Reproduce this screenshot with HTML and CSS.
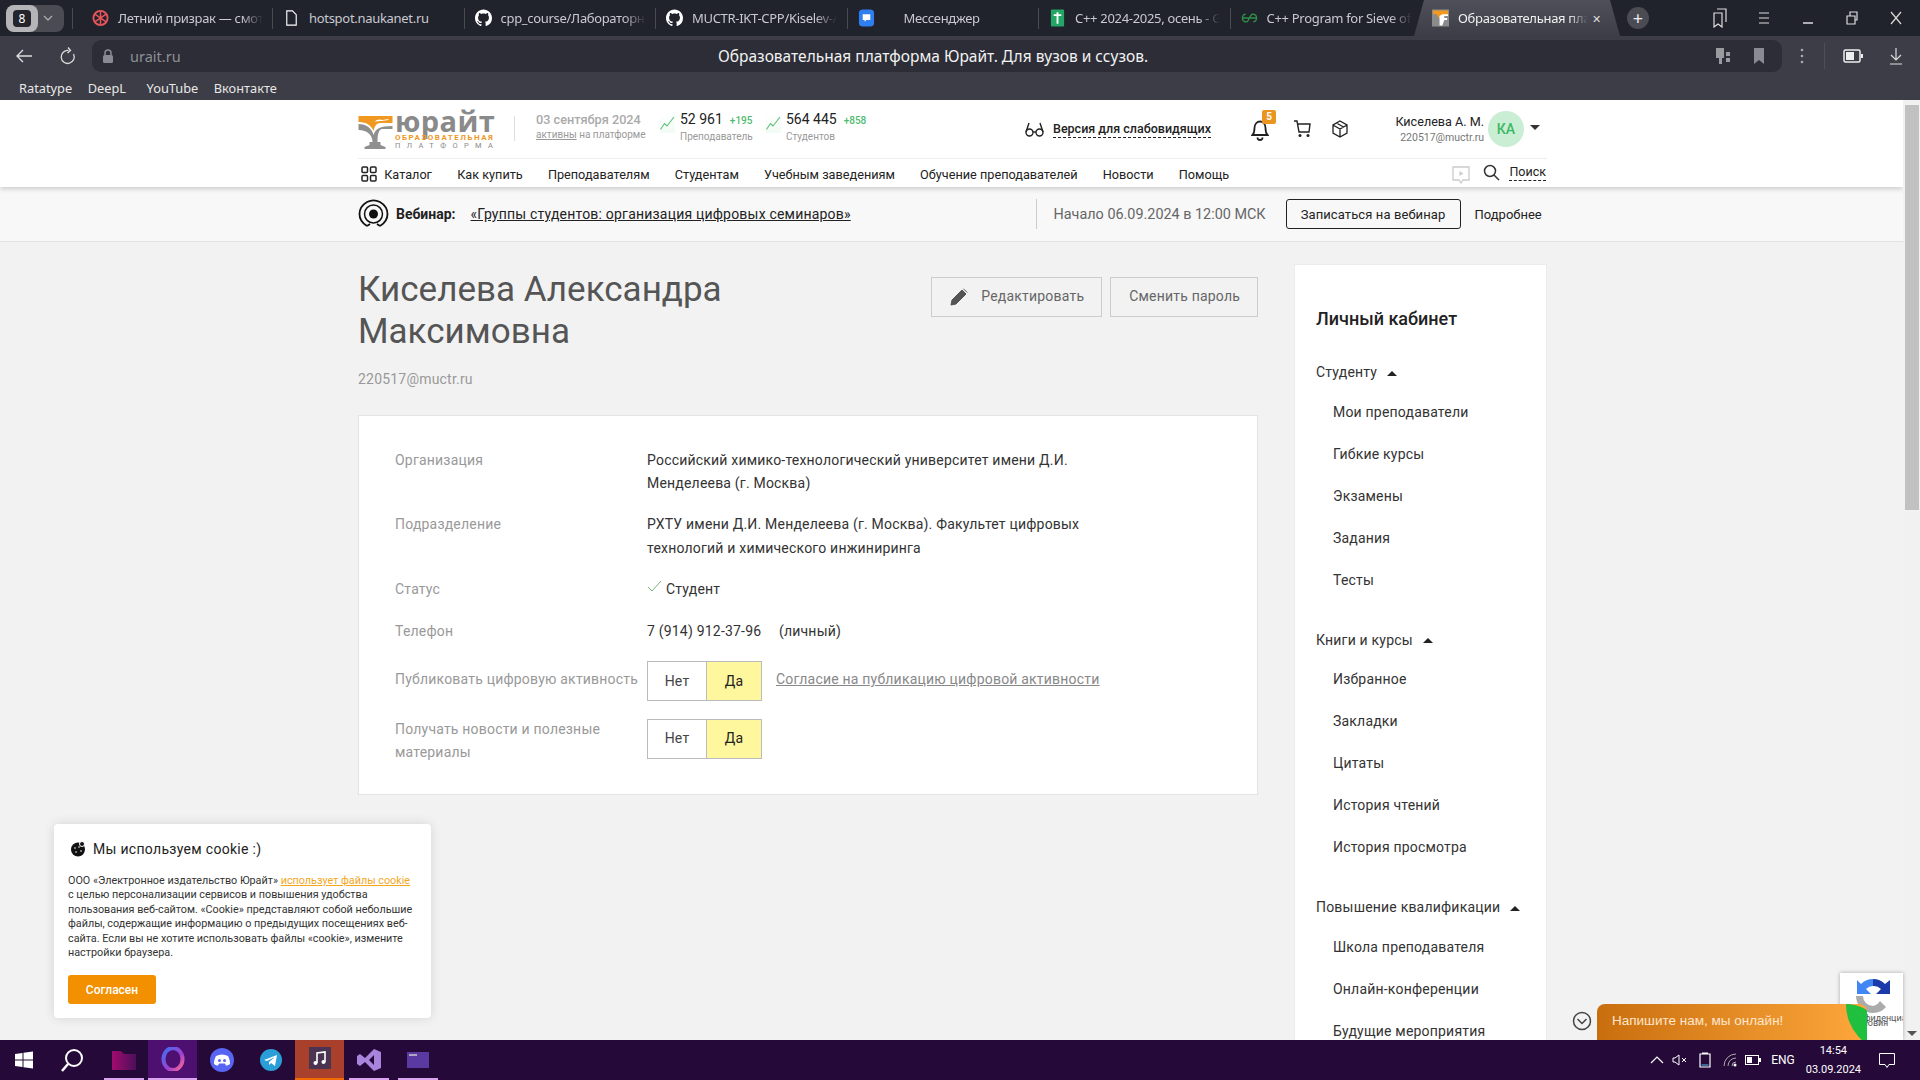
FILE: index.html
```html
<!DOCTYPE html>
<html lang="ru">
<head>
<meta charset="utf-8">
<title>Юрайт</title>
<link rel="stylesheet" href="styles.css">
</head>
<body>
<svg class="defs" aria-hidden="true"><defs>
<symbol id="gh" viewBox="0 0 16 16"><path fill="#fff" d="M8 0C3.58 0 0 3.58 0 8c0 3.54 2.29 6.53 5.47 7.59.4.07.55-.17.55-.38 0-.19-.01-.82-.01-1.49-2.01.37-2.53-.49-2.69-.94-.09-.23-.48-.94-.82-1.13-.28-.15-.68-.52-.01-.53.63-.01 1.08.58 1.23.82.72 1.21 1.87.87 2.33.66.07-.52.28-.87.51-1.07-1.78-.2-3.64-.89-3.64-3.95 0-.87.31-1.59.82-2.15-.08-.2-.36-1.02.08-2.12 0 0 .67-.21 2.2.82.64-.18 1.32-.27 2-.27.68 0 1.36.09 2 .27 1.53-1.04 2.2-.82 2.2-.82.44 1.1.16 1.92.08 2.12.51.56.82 1.27.82 2.15 0 3.07-1.87 3.75-3.65 3.95.29.25.54.73.54 1.48 0 1.07-.01 1.93-.01 2.2 0 .21.15.46.55.38A8.013 8.013 0 0016 8c0-4.42-3.58-8-8-8z"/></symbol>
<symbol id="trend" viewBox="0 0 15 15"><path d="M.5 14 L4.500 8 L7 10.500 L14 1.500" fill="none" stroke="#5cbf77" stroke-width="1.100"/></symbol>
</defs></svg>

<header class="browser">
  <div class="tabstrip">
    <div class="counter"><span class="counter-num"><span class="counter-in">8</span></span><svg class="counter-caret" width="10" height="6" viewBox="0 0 10 6"><path d="M1 1l4 4 4-4" fill="none" stroke="#aaa" stroke-width="1.3"/></svg></div>
    <div class="tab tab-first">
      <svg class="fav" viewBox="0 0 18 18"><circle cx="9" cy="9" r="7.5" fill="none" stroke="#e8545a" stroke-width="2"/><path d="M9 2v14M3 5l12 8M15 5L3 13" stroke="#e8545a" stroke-width="1.6"/></svg>
      <span class="tab-title">Летний призрак — смотреть онлайн</span>
    </div>
    <div class="tab">
      <svg class="fav" viewBox="0 0 18 18"><path d="M4 1.5h6l4 4v11H4z" fill="none" stroke="#fff" stroke-width="1.2"/></svg>
      <span class="tab-title tab-plain">hotspot.naukanet.ru</span>
    </div>
    <div class="tab"><svg class="fav"><use href="#gh"/></svg><span class="tab-title">cpp_course/Лабораторная работа</span></div>
    <div class="tab"><svg class="fav"><use href="#gh"/></svg><span class="tab-title">MUCTR-IKT-CPP/Kiselev-Alexandra</span></div>
    <div class="tab">
      <svg class="fav" viewBox="0 0 18 18"><rect x="1" y="0" width="16" height="18" rx="4" fill="#2f7ff0"/><path d="M5 5h8v6H9l-2 2v-2H5z" fill="#fff"/></svg>
      <span class="tab-title tab-msg">Мессенджер</span>
    </div>
    <div class="tab">
      <svg class="fav" viewBox="0 0 18 18"><rect x="2" y="0" width="14" height="18" rx="1" fill="#23a566"/><path d="M5 6h8M9 3v12" stroke="#fff" stroke-width="2"/></svg>
      <span class="tab-title">C++ 2024-2025, осень - Google</span>
    </div>
    <div class="tab">
      <svg class="fav" viewBox="0 0 18 18"><path d="M1 9h16M5 5a3.5 4 0 1 0 0 8h1c2 0 4-8 6-8h1a3.5 4 0 1 1 0 8" fill="none" stroke="#2f8d46" stroke-width="1.5"/></svg>
      <span class="tab-title">C++ Program for Sieve of Eratosthenes</span>
    </div>
    <div class="tab-active">
      <svg class="fav" viewBox="0 0 18 18"><rect width="18" height="18" fill="#8b8b8b"/><path d="M1 1h16v5h-6l-3 4-3-5H1z" fill="#f19a1f"/><path d="M8 7l3-2h6v2h-4v2h3v2h-3l-2 6H8z" fill="#fff"/></svg>
      <span class="tab-title tab-title-active">Образовательная платформа</span>
      <span class="tab-close">✕</span>
    </div>
    <div class="newtab">+</div>
    <div class="winctl">
      <svg width="16" height="20" viewBox="0 0 16 20"><path d="M5 1h9v13M2 5h8v14l-4-3-4 3z" fill="none" stroke="#ddd" stroke-width="1.2"/></svg>
      <svg width="16" height="14" viewBox="0 0 16 14"><path d="M3 2h10M3 7h10M3 12h10" stroke="#ddd" stroke-width="1.2"/></svg>
      <svg width="16" height="14" viewBox="0 0 16 14"><path d="M3 12h10" stroke="#ddd" stroke-width="1.5"/></svg>
      <svg width="16" height="16" viewBox="0 0 16 16"><path d="M3 6h8v8H3zM6 6V2h7v8h-2" fill="none" stroke="#ddd" stroke-width="1.2"/></svg>
      <svg width="16" height="16" viewBox="0 0 16 16"><path d="M3 2l10 12M13 2L3 14" stroke="#ddd" stroke-width="1.2"/></svg>
    </div>
  </div>
  <div class="toolbar">
    <svg class="tb-back" width="20" height="20" viewBox="0 0 20 20"><path d="M18 10H3M9 4l-6 6 6 6" fill="none" stroke="#ddd" stroke-width="1.4"/></svg>
    <svg class="tb-reload" width="18" height="20" viewBox="0 0 18 20"><path d="M14.5 8a6.5 6.5 0 1 1-5-3.5M9 1.5l2.5 3-3 2.5" fill="none" stroke="#ddd" stroke-width="1.3"/></svg>
    <div class="omni">
      <svg class="omni-lock" width="12" height="16" viewBox="0 0 12 16"><path d="M3 7V5a3 3 0 0 1 6 0v2" fill="none" stroke="#8a8b92" stroke-width="1.5"/><rect x="1" y="7" width="10" height="8" rx="1.5" fill="#8a8b92"/></svg>
      <span class="omni-url">urait.ru</span>
      <span class="omni-title">Образовательная платформа Юрайт. Для вузов и ссузов.</span>
      <svg class="omni-ic1" width="16" height="20" viewBox="0 0 16 20"><rect x="1" y="2" width="8" height="10" fill="#9a9ba1"/><rect x="4" y="12" width="3" height="6" fill="#9a9ba1"/><rect x="11" y="6" width="4" height="4" fill="#9a9ba1"/><rect x="11" y="12" width="4" height="4" fill="#9a9ba1"/></svg>
      <svg class="omni-ic2" width="12" height="18" viewBox="0 0 12 18"><path d="M1 1h10v16l-5-4-5 4z" fill="#8a8b92"/></svg>
    </div>
    <div class="tb-right">
      <svg width="4" height="16" viewBox="0 0 4 16"><circle cx="2" cy="2" r="1.3" fill="#aaa"/><circle cx="2" cy="8" r="1.3" fill="#aaa"/><circle cx="2" cy="14" r="1.3" fill="#aaa"/></svg>
      <span class="tb-sep"></span>
      <svg width="20" height="14" viewBox="0 0 20 14"><rect x="1" y="1" width="16" height="12" rx="1.5" fill="none" stroke="#eee" stroke-width="1.5"/><rect x="3" y="3" width="8" height="8" fill="#eee"/><rect x="18" y="5" width="2" height="4" fill="#eee"/></svg>
      <svg width="14" height="18" viewBox="0 0 14 18"><path d="M7 1v12M2 8l5 5 5-5M1 17h12" fill="none" stroke="#ddd" stroke-width="1.2"/></svg>
    </div>
  </div>
  <nav class="bookmarks"><span>Ratatype</span><span>DeepL</span><span>YouTube</span><span>Вконтакте</span></nav>
</header>

<div class="viewport">
  <div class="page">
    <div class="site-head">
      <div class="wrap">
        <div class="head-top">
          <div class="logo">
            <svg class="logo-mark" width="35" height="34" viewBox="0 0 34 34"><path d="M0 1h34v7H22c-4 0-6 3-7 8-2-5-6-9-15-9z" fill="#f0981f"/><path d="M16 7c2-3 6-3 8-2l6-1v1l-7 1c-2 0-5 0-7 1z" fill="#fff"/><path d="M0 9c8 0 13 4 15 11 2-6 6-9 19-9v3H24c-4 0-5 6-5 13h3v3l5 2v2H6v-2l5-2v-3h3c0-7-5-12-14-12z" fill="#8f8f8f"/></svg>
            <div class="logo-text">
              <span class="logo-name">юрайт</span>
              <span class="logo-sub1">ОБРАЗОВАТЕЛЬНАЯ</span>
              <span class="logo-sub2">ПЛАТФОРМА</span>
            </div>
          </div>
          <div class="stats">
            <div class="stat-date"><span class="date-big">03 сентября 2024</span><span class="stat-cap"><u>активны</u> на платформе</span></div>
            <div class="stat"><svg class="stat-ic"><use href="#trend"/></svg><div><div class="stat-line"><span class="stat-num">52 961</span><span class="stat-plus">+195</span></div><span class="stat-cap">Преподаватель</span></div></div>
            <div class="stat"><svg class="stat-ic"><use href="#trend"/></svg><div><div class="stat-line"><span class="stat-num">564 445</span><span class="stat-plus">+858</span></div><span class="stat-cap">Студентов</span></div></div>
          </div>
          <div class="vision">
            <svg width="19" height="15" viewBox="0 0 19 15"><path d="M1 10l3-9M18 10l-3-9" fill="none" stroke="#222" stroke-width="1.4"/><circle cx="4.5" cy="10.5" r="3.5" fill="none" stroke="#222" stroke-width="1.4"/><circle cx="14.5" cy="10.5" r="3.5" fill="none" stroke="#222" stroke-width="1.4"/><path d="M8 10h3" stroke="#222" stroke-width="1.4"/></svg>
            <span class="vision-text">Версия для слабовидящих</span>
          </div>
          <div class="head-icons">
            <div class="bell">
              <svg width="18" height="24" viewBox="0 0 18 24"><path d="M1.5 18c2-2 2-4 2-7 0-4 2.500-6.500 5.500-6.500s5.500 2.500 5.500 6.500c0 3 0 5 2 7zM6.500 20.500a2.500 2.500 0 0 0 5 0" fill="none" stroke="#222" stroke-width="1.8"/></svg>
              <span class="bell-badge">5</span>
            </div>
            <svg width="19" height="18" viewBox="0 0 19 18"><path d="M1 1h3l2 11h10l1-8H5" fill="none" stroke="#222" stroke-width="1.4"/><circle cx="7" cy="15.500" r="1.500" fill="#222"/><circle cx="15" cy="15.500" r="1.500" fill="#222"/></svg>
            <svg width="16" height="18" viewBox="0 0 16 18"><path d="M8 1l7 4v8l-7 4-7-4V5zM1 5l7 4 7-4M8 9v8M4.500 3l7 4" fill="none" stroke="#222" stroke-width="1.300"/></svg>
          </div>
          <div class="user">
            <div class="user-names"><span class="user-name">Киселева А. М.</span><span class="user-mail">220517@muctr.ru</span></div>
            <span class="avatar">КА</span>
            <span class="user-caret"></span>
          </div>
        </div>
        <nav class="head-nav">
          <svg class="nav-grid" width="16" height="16" viewBox="0 0 16 16"><g fill="none" stroke="#222" stroke-width="1.500"><rect x="1" y="1" width="5.500" height="5.500" rx="1"/><rect x="9.500" y="1" width="5.500" height="5.500" rx="1"/><rect x="1" y="9.500" width="5.500" height="5.500" rx="1"/><rect x="9.500" y="9.500" width="5.500" height="5.500" rx="1"/></g></svg>
          <a class="nav-cat">Каталог</a><a>Как купить</a><a>Преподавателям</a><a>Студентам</a><a>Учебным заведениям</a><a>Обучение преподавателей</a><a>Новости</a><a>Помощь</a>
          <div class="nav-right">
            <svg class="nav-play" width="18" height="18" viewBox="0 0 18 18"><path d="M1 1h16v13h-6l-2 3-2-3H1z" fill="none" stroke="#ccc" stroke-width="1.300"/><path d="M7.500 5l4 2.500-4 2.500z" fill="#ccc"/></svg>
            <svg width="17" height="17" viewBox="0 0 17 17"><circle cx="7" cy="7" r="5.500" fill="none" stroke="#333" stroke-width="1.500"/><path d="M11 11l5 5" stroke="#333" stroke-width="1.500"/></svg>
            <span class="nav-search">Поиск</span>
          </div>
        </nav>
      </div>
    </div>

    <div class="webinar">
      <div class="wrap webinar-in">
        <svg width="31" height="30" viewBox="0 0 31 30"><path d="M9 27C4 24 1.500 20 1.500 15S4 6 9 3M22 27c5-3 7.500-7 7.500-12S27 6 22 3M9 3a14 14 0 0 1 13 0M9 27l3-2M22 27l-3-2" fill="none" stroke="#111" stroke-width="1.800"/><circle cx="15.500" cy="15" r="9" fill="none" stroke="#111" stroke-width="1.500"/><circle cx="15.500" cy="15" r="4.500" fill="#111"/></svg>
        <b class="web-label">Вебинар:</b>
        <a class="web-link">«Группы студентов: организация цифровых семинаров»</a>
        <span class="web-date">Начало 06.09.2024 в 12:00 МСК</span>
        <span class="web-btn">Записаться на вебинар</span>
        <span class="web-more">Подробнее</span>
      </div>
    </div>

    <div class="wrap content">
      <main class="main">
        <div class="title-row">
          <h1>Киселева Александра Максимовна</h1>
          <div class="title-btns">
            <span class="btn"><svg class="btn-ic" width="18" height="18" viewBox="0 0 18 18"><path d="M1 17l1-5L12 2l4 4L6 16zM13.500.8l3.700 3.700" fill="#555" stroke="#555"/></svg>Редактировать</span>
            <span class="btn">Сменить пароль</span>
          </div>
        </div>
        <div class="email">220517@muctr.ru</div>
        <section class="card">
          <div class="row row-o"><div class="lbl">Организация</div><div class="val val-wide">Российский химико-технологический университет имени Д.И. Менделеева (г. Москва)</div></div>
          <div class="row row-d"><div class="lbl">Подразделение</div><div class="val val-wide">РХТУ имени Д.И. Менделеева (г. Москва). Факультет цифровых технологий и химического инжиниринга</div></div>
          <div class="row row-s"><div class="lbl">Статус</div><div class="val"><svg class="tick" width="15" height="13" viewBox="0 0 15 13"><path d="M1 7l4 4 9-10" fill="none" stroke="#79b079" stroke-width="1"/></svg>Студент</div></div>
          <div class="row row-t"><div class="lbl">Телефон</div><div class="val">7 (914) 912-37-96 <span class="phone-kind">(личный)</span></div></div>
          <div class="row row-c"><div class="lbl lbl-pub">Публиковать цифровую активность</div><div class="toggle"><span class="t-no">Нет</span><span class="t-yes">Да</span></div><a class="consent">Согласие на публикацию цифровой активности</a></div>
          <div class="row row-c row-last"><div class="lbl lbl-narrow">Получать новости и полезные материалы</div><div class="toggle"><span class="t-no">Нет</span><span class="t-yes">Да</span></div></div>
        </section>
      </main>
      <aside class="side">
        <h2>Личный кабинет</h2>
        <h3>Студенту<i class="up"></i></h3>
        <a>Мои преподаватели</a><a>Гибкие курсы</a><a>Экзамены</a><a>Задания</a><a>Тесты</a>
        <h3>Книги и курсы<i class="up"></i></h3>
        <a>Избранное</a><a>Закладки</a><a>Цитаты</a><a>История чтений</a><a>История просмотра</a>
        <h3>Повышение квалификации<i class="up"></i></h3>
        <a>Школа преподавателя</a><a>Онлайн-конференции</a><a>Будущие мероприятия</a><a>Архив мероприятий</a>
      </aside>
    </div>
  </div>
  <div class="scrollbar"><div class="thumb"></div><i class="sb-down"></i></div>

  <div class="cookie">
    <div class="cookie-title"><svg width="16" height="16" viewBox="0 0 16 16"><circle cx="8" cy="8.500" r="7" fill="#111"/><circle cx="12" cy="3" r="2.500" fill="#111" stroke="#fff"/><g fill="#fff"><circle cx="5" cy="7" r=".8"/><circle cx="9" cy="6" r=".8"/><circle cx="6" cy="11" r=".8"/><circle cx="11" cy="10" r=".8"/></g></svg>Мы используем cookie :)</div>
    <p class="cookie-text">ООО «Электронное издательство Юрайт» <a>использует файлы cookie</a> с целью персонализации сервисов и повышения удобства пользования веб-сайтом. «Cookie» представляют собой небольшие файлы, содержащие информацию о предыдущих посещениях веб-сайта. Если вы не хотите использовать файлы «cookie», измените настройки браузера.</p>
    <span class="cookie-btn">Согласен</span>
  </div>

  <div class="recaptcha">
    <svg width="34" height="34" viewBox="0 0 34 34"><path d="M17 0a17 17 0 0 1 12 5l5-4v14H20l5-5a10 10 0 0 0-8-3z" fill="#1c3aa9"/><path d="M17 0A17 17 0 0 0 5 5L1 1v14h14l-5-5a10 10 0 0 1 7-3z" fill="#4285f4"/><path d="M0 17a17 17 0 0 0 17 17 17 17 0 0 0 13-6l-6-6a10 10 0 0 1-7 5 10 10 0 0 1-10-10z" fill="#ababab"/></svg>
    <span class="rc-t">Конфиденциа<br>&nbsp;&nbsp;Условия</span>
  </div>
  <svg class="chat-toggle" width="20" height="20" viewBox="0 0 20 20"><circle cx="10" cy="10" r="8.500" fill="none" stroke="#444" stroke-width="1.500"/><path d="M5.500 8l4.500 4.500L14.500 8" fill="none" stroke="#444" stroke-width="1.500"/></svg>
  <div class="chat"><span>Напишите нам, мы онлайн!</span><i class="chat-leaf"></i></div>
</div>

<footer class="taskbar">
  <svg class="tk tk-start" width="18" height="18" viewBox="0 0 18 18"><path d="M0 3l7.500-1v6.500H0zM8.500 1.800L18 .5v8H8.500zM0 9.500h7.500V16L0 15zM8.500 9.500H18v8l-9.500-1.300z" fill="#fff"/></svg>
  <svg class="tk tk-search" width="24" height="24" viewBox="0 0 24 24"><circle cx="14" cy="10" r="8" fill="none" stroke="#fff" stroke-width="2"/><path d="M8 16l-6 7" stroke="#fff" stroke-width="2.500"/></svg>
  <span class="tk-cell tk-pinned"><svg width="24" height="20" viewBox="0 0 24 20"><defs><linearGradient id="fd" x1="0" x2="1"><stop offset="0" stop-color="#a10b6e"/><stop offset="1" stop-color="#4d0f5a"/></linearGradient></defs><path d="M0 1h9l3 3h12v16H0z" fill="url(#fd)"/></svg></span>
  <span class="tk-cell tk-opera"><svg width="24" height="24" viewBox="0 0 24 24"><defs><linearGradient id="op" x1="0" x2="1" y1="0" y2="1"><stop offset="0" stop-color="#3d6ff0"/><stop offset=".6" stop-color="#a040d0"/><stop offset="1" stop-color="#ff6a90"/></linearGradient></defs><ellipse cx="12" cy="12" rx="9.500" ry="11" fill="none" stroke="url(#op)" stroke-width="4"/></svg></span>
  <span class="tk-cell"><svg width="24" height="24" viewBox="0 0 24 24"><circle cx="12" cy="12" r="12" fill="#5865f2"/><path d="M6 8c4-2 8-2 12 0 1.500 3 2 5 2 8-1.500 1-3 1.500-4 1.500l-1-2h-6l-1 2c-1 0-2.500-.5-4-1.500 0-3 .5-5 2-8z" fill="#fff"/><circle cx="9.500" cy="12.500" r="1.500" fill="#5865f2"/><circle cx="14.500" cy="12.500" r="1.500" fill="#5865f2"/></svg></span>
  <span class="tk-cell"><svg width="22" height="22" viewBox="0 0 22 22"><circle cx="11" cy="11" r="11" fill="#2a9ed6"/><path d="M4 11l13-5-2 11-4-3-2 2v-3l6-5-8 4z" fill="#fff"/></svg></span>
  <span class="tk-cell tk-music"><svg width="22" height="24" viewBox="0 0 22 24"><rect width="22" height="22" fill="#4b3452"/><path d="M8 16V6l8-1v10" fill="none" stroke="#fff" stroke-width="1.600"/><circle cx="6.500" cy="16" r="2" fill="#fff"/><circle cx="14.500" cy="15" r="2" fill="#fff"/></svg></span>
  <span class="tk-cell tk-pinned"><svg width="24" height="24" viewBox="0 0 24 24"><path d="M17 1l7 3v16l-7 3-9-9-5 4-3-2V8l3-2 5 4zM17 7l-5 5 5 5z" fill="#a884dc"/></svg></span>
  <span class="tk-cell tk-pinned"><svg width="22" height="16" viewBox="0 0 22 16"><rect width="22" height="16" fill="#5a3aa0"/><path d="M2 3h8" stroke="#ccc" stroke-width="1.500"/></svg></span>
  <div class="tray">
    <svg width="14" height="8" viewBox="0 0 14 8"><path d="M1 7l6-6 6 6" fill="none" stroke="#fff" stroke-width="1.200"/></svg>
    <svg class="tr-vol" width="16" height="12" viewBox="0 0 16 12"><path d="M1 4h2l4-3v10L3 8H1zM10 4l4 4M14 4l-4 4" fill="none" stroke="#fff"/></svg>
    <svg class="tr-usb" width="12" height="16" viewBox="0 0 12 16"><path d="M1 2h10v13H1zM3 1h6" fill="none" stroke="#fff" stroke-width="1.200"/><path d="M2.500 13h7" stroke="#4fc3f7"/></svg>
    <svg class="tr-wifi" width="14" height="14" viewBox="0 0 14 14"><path d="M1 13A12 12 0 0 1 13 1M5 13a8 8 0 0 1 8-8M9 13a4 4 0 0 1 4-4" fill="none" stroke="#aaa"/><circle cx="12" cy="12" r="1.500" fill="#fff"/></svg>
    <svg class="tr-bat" width="16" height="10" viewBox="0 0 16 10"><rect x=".5" y=".5" width="13" height="9" fill="none" stroke="#fff"/><rect x="2" y="2" width="5" height="6" fill="#fff"/><rect x="14" y="3" width="2" height="4" fill="#fff"/></svg>
    <span class="tray-lang">ENG</span>
    <div class="clock"><span>14:54</span><span>03.09.2024</span></div>
    <svg class="tray-note" width="16" height="15" viewBox="0 0 16 15"><path d="M.5.5h15v11H10l-2 3-2-3H.5z" fill="none" stroke="#fff"/></svg>
  </div>
</footer>
</body>
</html>
```
FILE: styles.css
```css
* { box-sizing: border-box; }
html, body { margin: 0; height: 100%; }
body {
  width: 1920px; height: 1080px; overflow: hidden;
  display: flex; flex-direction: column;
  font-family: Roboto, "Liberation Sans", sans-serif;
  color: #222; background: #f2f2f2;
}
.defs { position: absolute; width: 0; height: 0; }
a { color: inherit; }

/* browser chrome */
.browser { flex: none; height: 100px; background: #3c3d46; color: #ddd; font-family: "Noto Sans", sans-serif; }
.tabstrip { height: 36px; background: #20222c; display: flex; align-items: center; font-size: 13px; padding-left: 6px; }
.counter { width: 58px; height: 27px; background: #4a4b53; border-radius: 8px; display: flex; align-items: center; flex: none; margin-right: 8px; }
.counter-num { width: 32px; height: 27px; background: #b5b5b8; border-radius: 8px; display: flex; align-items: center; justify-content: center; }
.counter-in { width: 18px; height: 17px; border-radius: 4px; background: #23242c; color: #fff; font-size: 12px; line-height: 17px; text-align: center; }
.counter-caret { margin-left: 5px; }
.tab { flex: none; width: 191.500px; height: 21px; display: flex; align-items: center; gap: 9px; padding-left: 10px; border-left: 1px solid #4a4b53; overflow: hidden; }
.tab-first { width: 200px; padding-left: 19px; }
.fav { flex: none; width: 17px; height: 18px; }
.tab-title { flex: none; width: 145px; overflow: hidden; white-space: nowrap; color: #c9cad0; letter-spacing: -.3px; -webkit-mask-image: linear-gradient(90deg, #000 85%, transparent); mask-image: linear-gradient(90deg, #000 85%, transparent); }
.tab-plain { -webkit-mask-image: none; mask-image: none; }
.tab-msg { margin-left: 20px; width: 110px; }
.tab-active { flex: none; width: 206px; height: 36px; margin-left: -7px; padding-left: 18px; display: flex; align-items: center; gap: 9px; background: linear-gradient(#4f5059, #3c3d46); clip-path: polygon(10px 0, 196px 0, 206px 100%, 0 100%); }
.tab-title-active { width: 130px; color: #f0f0f0; }
.tab-close { font-size: 11px; color: #ddd; margin-left: -5px; }
.newtab { width: 22px; height: 22px; border-radius: 50%; background: #4a4b53; color: #eee; display: flex; align-items: center; justify-content: center; font-size: 18px; margin-left: 7px; flex: none; }
.winctl { display: flex; align-items: center; gap: 28px; margin-left: auto; padding-right: 16px; }
.toolbar { height: 36px; display: flex; align-items: center; padding: 4px 0 0 14px; }
.tb-back { margin-right: 25px; }
.omni { flex: none; width: 1690px; height: 32px; margin-left: 15px; background: #2c2d36; border-radius: 9px; position: relative; display: flex; align-items: center; padding-left: 10px; }
.omni-lock { margin-right: 16px; }
.omni-url { font-size: 14.500px; color: #8f9096; }
.omni-title { position: absolute; left: 626px; top: 5px; font-size: 15.500px; line-height: 22px; color: #f2f2f2; white-space: nowrap; }
.omni-ic1 { margin-left: auto; margin-right: 22px; }
.omni-ic2 { margin-right: 17px; }
.tb-right { display: flex; align-items: center; flex: none; margin-left: 18px; }
.tb-sep { width: 1px; height: 26px; background: #4d4e56; margin: 0 18px 0 20px; }
.tb-right svg:last-child { margin-left: 26px; }
.bookmarks { height: 28px; display: flex; align-items: center; font-size: 12.800px; color: #e8e8e8; padding: 4px 0 0 19px; gap: 15.500px; }
.bookmarks span:nth-child(2) { margin-right: 5px; }

/* viewport */
.viewport { flex: none; height: 940px; position: relative; display: flex; overflow: hidden; }
.page { flex: 1; min-width: 0; overflow: hidden; }
.scrollbar { flex: none; width: 17px; background: #f1f1f1; position: relative; padding-top: 5px; }
.thumb { width: 14px; height: 405px; margin-left: 2px; background: #c1c1c1; }
.sb-down { position: absolute; left: 4px; bottom: 4px; border: 5px solid transparent; border-top: 5px solid #555; border-bottom: 0; }
.wrap { width: 1189px; margin: 0 auto 0 358px; }

/* site header */
.site-head { background: #fff; height: 87px; box-shadow: 0 2px 5px rgba(0,0,0,.18); position: relative; }
.head-top { height: 59px; display: flex; align-items: center; border-bottom: 1px solid #eee; padding-right: 7px; }
.logo { display: flex; align-items: flex-start; flex: none; width: 157px; height: 38px; position: relative; }
.logo::after { content: ""; position: absolute; right: 0; top: 6px; height: 25px; width: 1px; background: #ddd; }
.logo-mark { flex: none; margin-top: 5px; }
.logo-text { display: flex; flex-direction: column; margin-left: 2px; line-height: 1; width: 102px; }
.logo-name { font-family: "Open Sans", sans-serif; font-weight: 700; font-size: 29px; line-height: 22px; color: #8a8a8a; letter-spacing: .4px; white-space: nowrap; }
.logo-sub1 { font-size: 8px; line-height: 8px; font-weight: 700; color: #f0981f; letter-spacing: 1.500px; margin-top: 2px; white-space: nowrap; }
.logo-sub2 { font-size: 7.500px; line-height: 8px; color: #8a8a8a; letter-spacing: 6.400px; white-space: nowrap; }
.stats { display: flex; flex: none; margin: 0 0 3px 21px; width: 489px; }
.stat-date { display: flex; flex-direction: column; width: 124px; color: #999; }
.date-big { font-size: 12.700px; line-height: 17px; font-weight: 500; color: #aaa; }
.stat-cap { display: block; font-size: 10px; line-height: 14px; color: #999; white-space: nowrap; }
.stat { display: flex; width: 106px; gap: 5px; }
.stat-ic { width: 15px; height: 20px; margin-top: 2px; background: linear-gradient(#fff, #f2fbf4); flex: none; }
.stat-line { display: flex; align-items: baseline; gap: 7px; line-height: 16px; margin-bottom: 1px; }
.stat-num { font-size: 14px; color: #222; }
.stat-plus { font-size: 10px; font-weight: 500; color: #4fbb6f; }
.vision { display: flex; align-items: center; gap: 9px; flex: none; width: 226px; }
.vision-text { font-size: 12.500px; font-weight: 500; border-bottom: 1px dashed #222; line-height: 16px; color: #222; white-space: nowrap; }
.head-icons { display: flex; align-items: center; gap: 20px; flex: none; }
.bell { position: relative; height: 24px; margin-right: 4px; }
.bell-badge { position: absolute; left: 11px; top: -7px; width: 14px; height: 14px; background: #e9951f; color: #fff; font-size: 10px; font-weight: 700; text-align: center; line-height: 14px; border-radius: 2px; }
.user { display: flex; align-items: center; margin-left: auto; }
.user-names { display: flex; flex-direction: column; align-items: flex-end; flex: none; }
.user-name { font-size: 12.600px; line-height: 16px; color: #222; white-space: nowrap; }
.user-mail { font-size: 10.500px; line-height: 15px; color: #777; }
.avatar { width: 36px; height: 36px; border-radius: 50%; background: #c9eed3; color: #3cb862; font-size: 14px; font-weight: 500; display: flex; align-items: center; justify-content: center; margin-left: 4px; }
.user-caret { border: 5px solid transparent; border-top: 5px solid #333; border-bottom: 0; margin-left: 6px; margin-top: -3px; }
.head-nav { height: 28px; display: flex; align-items: center; gap: 25.200px; font-size: 12.700px; color: #222; white-space: nowrap; padding: 2px 1px 0 3px; }
.nav-grid { margin-right: -18px; flex: none; margin-top: -1px; }
.nav-right { margin-left: auto; display: flex; align-items: center; gap: 13px; margin-top: -3px; }
.nav-play { margin-top: 4px; }
.nav-search { font-size: 12.500px; border-bottom: 1px dashed #222; line-height: 16px; margin-left: -4px; }

/* webinar */
.webinar { height: 55px; background: #f8f8f8; border-bottom: 1px solid #e2e2e2; }
.webinar-in { height: 54px; display: flex; align-items: center; }
.web-label { font-size: 14px; font-weight: 700; margin-left: 7px; }
.web-link { font-size: 14px; letter-spacing: .2px; margin-left: 15px; text-decoration: underline; flex: none; width: 565px; }
.web-date { font-size: 14.400px; color: #666; border-left: 1px solid #ccc; height: 30px; line-height: 31px; padding-left: 17px; flex: none; width: 250px; white-space: nowrap; }
.web-btn { flex: none; width: 175px; height: 30px; border: 1px solid #222; border-radius: 3px; font-size: 13px; letter-spacing: .1px; display: flex; align-items: center; justify-content: center; }
.web-more { font-size: 13px; margin-left: 14px; }

/* content */
.content { display: flex; gap: 36px; align-items: flex-start; padding-top: 22px; }
.main { width: 900px; flex: none; }
.title-row { display: flex; justify-content: space-between; align-items: flex-start; padding-top: 2px; }
h1 { margin: 0; width: 440px; font-size: 35px; line-height: 42px; font-weight: 400; color: #555; padding-top: 3px; }
.title-btns { display: flex; gap: 8px; padding-top: 11px; }
.btn { height: 40px; border: 1px solid #ccc; background: #f2f2f2; color: #666; font-size: 14px; letter-spacing: .2px; display: flex; align-items: center; padding: 0 17px 2px 18px; }
.btn-ic { margin-right: 13px; margin-top: 2px; }
.email { font-size: 14px; letter-spacing: .2px; color: #999; margin-top: 16px; line-height: 20px; }
.card { margin-top: 26px; height: 380px; background: #fff; border: 1px solid #e4e4e4; padding: 33px 36px 0; font-size: 14px; letter-spacing: .2px; }
.row { display: flex; line-height: 23px; margin-bottom: 17px; }
.row-d { line-height: 24px; margin-bottom: 18px; }
.row-t { margin-bottom: 18px; }
.lbl { width: 252px; flex: none; color: #999; padding-right: 8px; white-space: nowrap; }
.lbl-pub { padding-bottom: 3px; }
.lbl-narrow { white-space: normal; padding-top: 5px; padding-right: 30px; }
.val { color: #333; }
.val-wide { width: 440px; }
.row-s { margin-bottom: 19px; }
.tick { margin-right: 4px; vertical-align: 1px; }
.phone-kind { margin-left: 14px; }
.row-c { align-items: center; margin-bottom: 12px; }
.toggle { display: flex; height: 40px; width: 115px; border: 1px solid #bbb; flex: none; }
.t-no { width: 59px; background: #fff; color: #444; display: flex; align-items: center; justify-content: center; border-right: 1px solid #bbb; }
.t-yes { flex: 1; background: #fff79e; color: #222; display: flex; align-items: center; justify-content: center; }
.consent { margin: 0 0 3px 14px; color: #888; text-decoration: underline; }
.side { width: 253px; flex: none; height: 900px; background: #fff; border: 1px solid #ececec; padding: 0 20px 0 21px; display: flex; flex-direction: column; }
.side h2 { margin: 42px 0 0; font-size: 18px; font-weight: 500; line-height: 24px; color: #222; }
.side h3 { margin: 18px 0 19.700px; font-size: 14px; letter-spacing: .2px; font-weight: 400; line-height: 20px; color: #333; display: flex; align-items: center; }
.side h2 + h3 { margin-top: 31px; }
.up { border: 5px solid transparent; border-bottom: 5px solid #222; border-top: 0; margin-left: 10px; margin-top: 2px; }
.side a { display: block; font-size: 14px; letter-spacing: .2px; line-height: 20px; height: 42px; padding-left: 17px; color: #333; white-space: nowrap; flex: none; }

/* overlays */
.cookie { position: absolute; left: 54px; top: 724px; width: 377px; height: 194px; background: #fff; border-radius: 4px; box-shadow: 0 0 12px rgba(0,0,0,.12); padding: 16px 14px; }
.cookie-title { display: flex; align-items: center; gap: 7px; font-size: 14px; line-height: 18px; letter-spacing: .3px; margin-left: 2px; }
.cookie-text { margin: 16px 0 0; font-size: 10.800px; line-height: 14.400px; color: #333; }
.cookie-text a { color: #f2a71e; text-decoration: underline; }
.cookie-btn { position: absolute; left: 14px; top: 151px; width: 88px; height: 29px; background: #f29000; color: #fff; border-radius: 3px; font-size: 12px; font-weight: 500; display: flex; align-items: center; justify-content: center; }
.recaptcha { position: absolute; left: 1840px; top: 873px; width: 63px; height: 67px; background: #fff; box-shadow: 0 0 4px rgba(0,0,0,.3); overflow: hidden; padding: 6px 0 0 16px; }
.recaptcha svg { display: block; }
.rc-t { display: block; font-size: 9px; line-height: 5px; color: #555; white-space: nowrap; margin: 3px 0 0 -8px; }
.chat-toggle { position: absolute; left: 1572px; top: 911px; }
.chat { position: absolute; left: 1597px; top: 904px; width: 270px; height: 36px; background: linear-gradient(90deg, #c96e0e, #fda73b); border-radius: 8px 8px 0 0; overflow: hidden; font-family: "Liberation Sans", sans-serif; font-size: 13.500px; color: #ffe6cc; display: flex; align-items: center; padding: 0 0 4px 15px; }
.chat-leaf { position: absolute; right: 0; top: 0; width: 42px; height: 46px; background: #1fbf3f; border-radius: 0 100% 0 100%; transform: translate(21px, 0); }

/* taskbar */
.taskbar { flex: none; height: 40px; background: #250a39; display: flex; align-items: center; color: #fff; }
.tk-start { margin-left: 15px; }
.tk-search { margin-left: 27px; margin-right: 15px; }
.tk-cell { width: 49px; height: 40px; display: flex; align-items: center; justify-content: center; flex: none; }
.tk-pinned { background: linear-gradient(#d9a3f0, #d9a3f0) center bottom / 40px 2px no-repeat; }
.tk-opera { background: #4e1070; border-bottom: 2px solid #d9a3f0; }
.tk-music { background: #a8402c; border-bottom: 2px solid #f06a00; }
.tray { margin-left: auto; display: flex; align-items: center; gap: 10px; padding-right: 25px; font-size: 12px; }
.tr-vol { margin-left: -2px; }
.tr-usb { margin-left: 1px; }
.tr-wifi { margin-left: 2px; }
.tr-bat { margin-left: -2px; }
.clock { display: flex; flex-direction: column; align-items: center; font-size: 11px; line-height: 19px; margin-left: 1px; margin-right: 8px; }
```
